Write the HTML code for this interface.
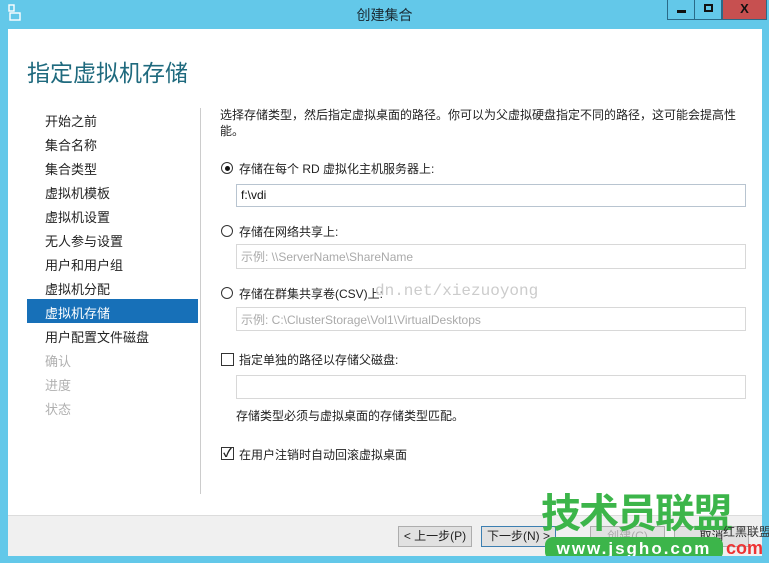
<!DOCTYPE html>
<html><head><meta charset="utf-8"><style>
*{margin:0;padding:0;box-sizing:border-box}
body{width:769px;height:563px;background:#63c8e9;position:relative;overflow:hidden;font-family:"Liberation Sans","Noto Sans CJK SC",sans-serif;font-size:12px;color:#222}
.a{position:absolute}
.title{left:0;top:5px;width:769px;text-align:center;font-size:14px;color:#1a2a33}
.wb{top:0;height:20px;border:1px solid #2a6a88;border-top:none}
.main{left:8px;top:29px;width:754px;height:486px;background:#fff}
.foot{left:8px;top:515px;width:754px;height:41px;background:#f0f0f0;border-top:1px solid #dcdcdc}
h1{position:absolute;left:27px;top:54px;font-size:23px;font-weight:normal;color:#1f6a7e}
.nav{left:45px;font-size:13px;color:#222}
.sel{left:27px;top:299px;width:171px;height:24px;background:#1770b8}
.dis{color:#b0b0b0}
.inp{left:236px;width:510px;border:1px solid #d8d8d8;background:#fff;padding:3px 4px;font-size:12px;color:#aaa}
.rad{width:12px;height:12px;border:1px solid #333;border-radius:50%;background:#fff}
.chk{width:13px;height:13px;border:1px solid #333;background:#fff}
.btn{top:526px;height:21px;border:1px solid #adadad;background:#e1e1e1;font-size:12px;text-align:center;line-height:19px}
</style></head><body>
<svg class="a" style="left:8px;top:4px" width="14" height="18" viewBox="0 0 14 18"><rect x="1" y="1" width="5" height="6" fill="none" stroke="#fff" stroke-width="1.4"/><rect x="2" y="9" width="10" height="7" fill="none" stroke="#fff" stroke-width="1.4"/></svg>
<div class="a title">创建集合</div>
<div class="a wb" style="left:667px;width:28px;background:#63c8e9"><div class="a" style="left:9px;top:10px;width:9px;height:3px;background:#111"></div></div>
<div class="a wb" style="left:694px;width:28px;background:#63c8e9"><div class="a" style="left:9px;top:4px;width:9px;height:8px;border:2px solid #111"></div></div>
<div class="a wb" style="left:722px;width:45px;background:#c75050;color:#111;font-weight:bold;font-size:13px;text-align:center;line-height:18px">X</div>
<div class="a main"></div>
<h1>指定虚拟机存储</h1>
<div class="a sel"></div>
<div class="a nav" style="top:111px">开始之前</div>
<div class="a nav" style="top:135px">集合名称</div>
<div class="a nav" style="top:159px">集合类型</div>
<div class="a nav" style="top:183px">虚拟机模板</div>
<div class="a nav" style="top:207px">虚拟机设置</div>
<div class="a nav" style="top:231px">无人参与设置</div>
<div class="a nav" style="top:255px">用户和用户组</div>
<div class="a nav" style="top:279px">虚拟机分配</div>
<div class="a nav" style="top:303px;color:#fff">虚拟机存储</div>
<div class="a nav" style="top:327px">用户配置文件磁盘</div>
<div class="a nav dis" style="top:351px">确认</div>
<div class="a nav dis" style="top:375px">进度</div>
<div class="a nav dis" style="top:399px">状态</div>
<div class="a" style="left:200px;top:108px;width:1px;height:386px;background:#ccc"></div>
<div class="a" style="left:220px;top:107px;width:530px;line-height:16px">选择存储类型，然后指定虚拟桌面的路径。你可以为父虚拟硬盘指定不同的路径，这可能会提高性能。</div>
<div class="a rad" style="left:221px;top:162px"><div class="a" style="left:2.5px;top:2.5px;width:5px;height:5px;border-radius:50%;background:#111"></div></div>
<div class="a" style="left:239px;top:160px">存储在每个 RD 虚拟化主机服务器上:</div>
<div class="a inp" style="top:184px;height:23px;color:#111;border-color:#b8c4d0">f:\vdi</div>
<div class="a rad" style="left:221px;top:225px"></div>
<div class="a" style="left:239px;top:223px">存储在网络共享上:</div>
<div class="a inp" style="top:244px;height:25px">示例: \\ServerName\ShareName</div>
<div class="a rad" style="left:221px;top:287px"></div>
<div class="a" style="left:239px;top:285px">存储在群集共享卷(CSV)上:</div>
<div class="a" style="left:375px;top:282px;font-family:'Liberation Mono',monospace;font-size:16px;color:#ccc">dn.net/xiezuoyong</div>
<div class="a inp" style="top:307px;height:24px">示例: C:\ClusterStorage\Vol1\VirtualDesktops</div>
<div class="a chk" style="left:221px;top:353px"></div>
<div class="a" style="left:239px;top:351px">指定单独的路径以存储父磁盘:</div>
<div class="a inp" style="top:375px;height:24px"></div>
<div class="a" style="left:236px;top:407px">存储类型必须与虚拟桌面的存储类型匹配。</div>
<div class="a chk" style="left:221px;top:447px;font-size:12px;line-height:11px;text-align:center;font-weight:bold">✓</div>
<div class="a" style="left:239px;top:446px">在用户注销时自动回滚虚拟桌面</div>
<div class="a foot"></div>
<div class="a btn" style="left:398px;width:74px">&lt; 上一步(P)</div>
<div class="a btn" style="left:481px;width:75px;border-color:#3c7fb1">下一步(N) &gt;</div>
<div class="a btn" style="left:590px;width:75px;color:#aaa">创建(C)</div>
<div class="a btn" style="left:674px;width:75px">取消</div>
<div class="a" style="left:541px;top:492px;font-size:40px;font-weight:bold;color:#3cb54a;letter-spacing:-2px;line-height:44px">技术员联盟</div>
<div class="a" style="left:545px;top:537px;width:178px;height:23px;border-radius:8px;background:#3cb54a;color:#fff;font-size:17px;font-weight:bold;text-align:center;line-height:23px;letter-spacing:2px">www.jsgho.com</div>
<div class="a" style="left:726px;top:538px;font-size:18px;color:#e33;font-weight:bold">com</div>
<div class="a" style="left:723px;top:523px;font-size:12px;color:#333;white-space:nowrap">红黑联盟</div>
<div class="a" style="left:0;top:556px;width:769px;height:7px;background:#63c8e9"></div>
</body></html>
